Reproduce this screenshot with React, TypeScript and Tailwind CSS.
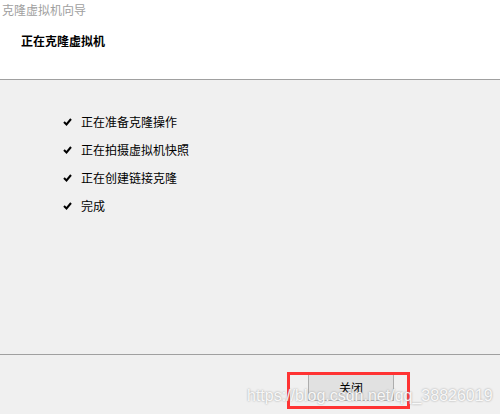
import React from "react";

const Check = () => (
  <svg width="9" height="8" viewBox="0 0 9 8" className="shrink-0">
    <path d="M1 4 L3.5 6.5 L8 1" fill="none" stroke="#000" strokeWidth="2" />
  </svg>
);

export default function App() {
  const items = ["正在准备克隆操作", "正在拍摄虚拟机快照", "正在创建链接克隆", "完成"];
  return (
    <div
      className="relative w-[500px] h-[414px] overflow-hidden bg-[#f0f0f0] text-[12px]"
      style={{ fontFamily: '"Noto Sans CJK SC", "Liberation Sans", sans-serif' }}
    >
      <div className="h-[80px] bg-white border-b border-[#a0a0a0] flex flex-col">
        <div className="pl-[2px] pt-[2px] leading-[16px] text-[#a0a0a0]">克隆虚拟机向导</div>
        <div className="pl-[21px] pt-[15px] leading-[16px] font-bold text-black">正在克隆虚拟机</div>
      </div>
      <div className="h-[275px] border-b border-[#a0a0a0] pt-[28px] pl-[63px] flex flex-col">
        {items.map((t) => (
          <div key={t} className="h-[28px] flex items-center gap-[9px] text-black">
            <Check />
            <span className="leading-[28px]">{t}</span>
          </div>
        ))}
      </div>
      <div className="pt-[19px] pl-[308px]">
        <div className="w-[86px] h-[27px] bg-[#e1e1e1] border border-[#adadad] flex items-center justify-center text-black">
          关闭
        </div>
      </div>
      <div className="absolute left-[287px] top-[372px] w-[123px] h-[37px] border-[3px] border-[#ff3333]" />
      <div
        className="absolute left-[247px] top-[387px] text-[16px] leading-[18px] text-white/90 [text-shadow:0_0_2px_#909090] whitespace-nowrap"
        style={{ fontFamily: '"Liberation Sans", Arial, sans-serif' }}
      >
        https://blog.csdn.net/qq_38826019
      </div>
    </div>
  );
}
